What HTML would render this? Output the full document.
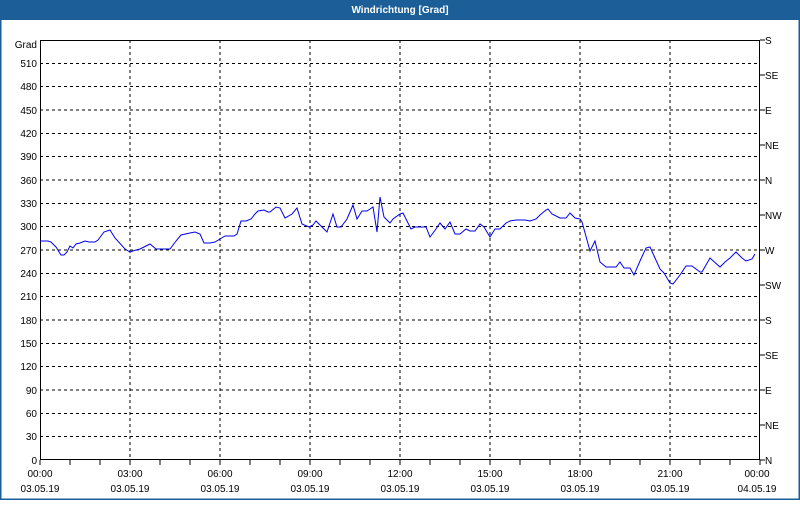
<!DOCTYPE html>
<html><head><style>
html,body{margin:0;padding:0;background:#fff;}
body{width:800px;height:500px;overflow:hidden;font-family:"Liberation Sans",sans-serif;}
</style></head><body>
<svg width="800" height="500" xmlns="http://www.w3.org/2000/svg" font-family="Liberation Sans, sans-serif" font-size="10">
<rect x="0" y="0" width="800" height="500" fill="#fff"/>
<rect x="0.75" y="0.75" width="798.5" height="498.5" fill="none" stroke="#1c5f98" stroke-width="1.5"/>
<rect x="0" y="0" width="800" height="20" fill="#1c5f98"/>
<text x="400" y="13" fill="#fff" font-weight="bold" font-size="10" text-anchor="middle">Windrichtung [Grad]</text>
<g stroke="#000" stroke-width="1" stroke-dasharray="3,3" fill="none" shape-rendering="crispEdges">
<path d="M40 436.67H760M40 413.33H760M40 390H760M40 366.67H760M40 343.33H760M40 320H760M40 296.67H760M40 273.33H760M40 250H760M40 226.67H760M40 203.33H760M40 180H760M40 156.67H760M40 133.33H760M40 110H760M40 86.67H760M40 63.33H760"/>
<path d="M130 40V460M220 40V460M310 40V460M400 40V460M490 40V460M580 40V460M670 40V460"/>
</g>
<g stroke="#000" stroke-width="1" fill="none" shape-rendering="crispEdges">
<path d="M40.5 40.5H759.5V459.5H40.5Z"/>
<path d="M70 460v5M100 460v5M130 460v5M160 460v5M190 460v5M220 460v5M250 460v5M280 460v5M310 460v5M340 460v5M370 460v5M400 460v5M430 460v5M460 460v5M490 460v5M520 460v5M550 460v5M580 460v5M610 460v5M640 460v5M670 460v5M700 460v5M730 460v5M40 460v5M760 460v5"/>
<path d="M760 40h5M760 75h5M760 110h5M760 145h5M760 180h5M760 215h5M760 250h5M760 285h5M760 320h5M760 355h5M760 390h5M760 425h5M760 460h5"/>
</g>
<polyline fill="none" stroke="#0000ee" stroke-width="1" points="40,241 48,241 51,242 56,247 61,255 64,255 67,252 70,246 73,248 76,244 80,243 85,241 89,242 95,242 98,240 104,232 110,230 115,238 125,249 130,252 136,250 140,249 146,246 150,244 156,249 164,249 170,249 176,241 181,235 190,233 195,232 200,234 204,243 210,243 215,242 220,239 225,236 230,236 234,236 237,234 241,221 246,221 251,219 255,214 258,211 264,210 268,212 270,212 276,207 280,208 285,218 292,214 297,208 302,224 309,227 313,225 316,221 322,227 327,232 333,214 337,227 341,227 347,219 353,205 357,219 362,211 367,211 370,209 373,207 377,232 380,197 384,217 390,223 393,219 400,214 403,213 411,229 415,227 426,227 430,237 436,229 440,223 445,229 450,222 455,234 460,234 466,229 470,231 475,231 480,224 484,227 490,237 495,229 500,229 506,223 510,221 516,220 525,220 530,221 536,219 540,215 546,210 548,209 552,214 560,218 566,218 570,213 575,218 580,219 582,222 587,240 590,251 595,241 600,262 606,267 616,267 620,262 624,268 630,268 634,275 640,261 646,248 650,247 655,258 660,269 664,273 670,283 673,284 680,275 686,266 692,266 700,272 702,272 710,258 720,267 725,262 730,258 736,252 742,258 746,261 752,259 755,254"/>
<g fill="#000" text-anchor="end">
<text x="37" y="48">Grad</text>
<text x="37" y="67">510</text><text x="37" y="90">480</text><text x="37" y="114">450</text><text x="37" y="137">420</text><text x="37" y="160">390</text><text x="37" y="184">360</text><text x="37" y="207">330</text><text x="37" y="230">300</text><text x="37" y="254">270</text><text x="37" y="277">240</text><text x="37" y="300">210</text><text x="37" y="324">180</text><text x="37" y="347">150</text><text x="37" y="370">120</text><text x="37" y="394">90</text><text x="37" y="417">60</text><text x="37" y="440">30</text><text x="37" y="464">0</text>
</g>
<g fill="#000">
<text x="765" y="44">S</text><text x="765" y="79">SE</text><text x="765" y="114">E</text><text x="765" y="149">NE</text><text x="765" y="184">N</text><text x="765" y="219">NW</text><text x="765" y="254">W</text><text x="765" y="289">SW</text><text x="765" y="324">S</text><text x="765" y="359">SE</text><text x="765" y="394">E</text><text x="765" y="429">NE</text><text x="765" y="464">N</text>
</g>
<g fill="#000" text-anchor="middle">
<text x="40" y="477">00:00</text><text x="130" y="477">03:00</text><text x="220" y="477">06:00</text><text x="310" y="477">09:00</text><text x="400" y="477">12:00</text><text x="490" y="477">15:00</text><text x="580" y="477">18:00</text><text x="670" y="477">21:00</text><text x="757" y="477">00:00</text>
<text x="40" y="492">03.05.19</text><text x="130" y="492">03.05.19</text><text x="220" y="492">03.05.19</text><text x="310" y="492">03.05.19</text><text x="400" y="492">03.05.19</text><text x="490" y="492">03.05.19</text><text x="580" y="492">03.05.19</text><text x="670" y="492">03.05.19</text><text x="757" y="492">04.05.19</text>
</g>
</svg>
</body></html>
